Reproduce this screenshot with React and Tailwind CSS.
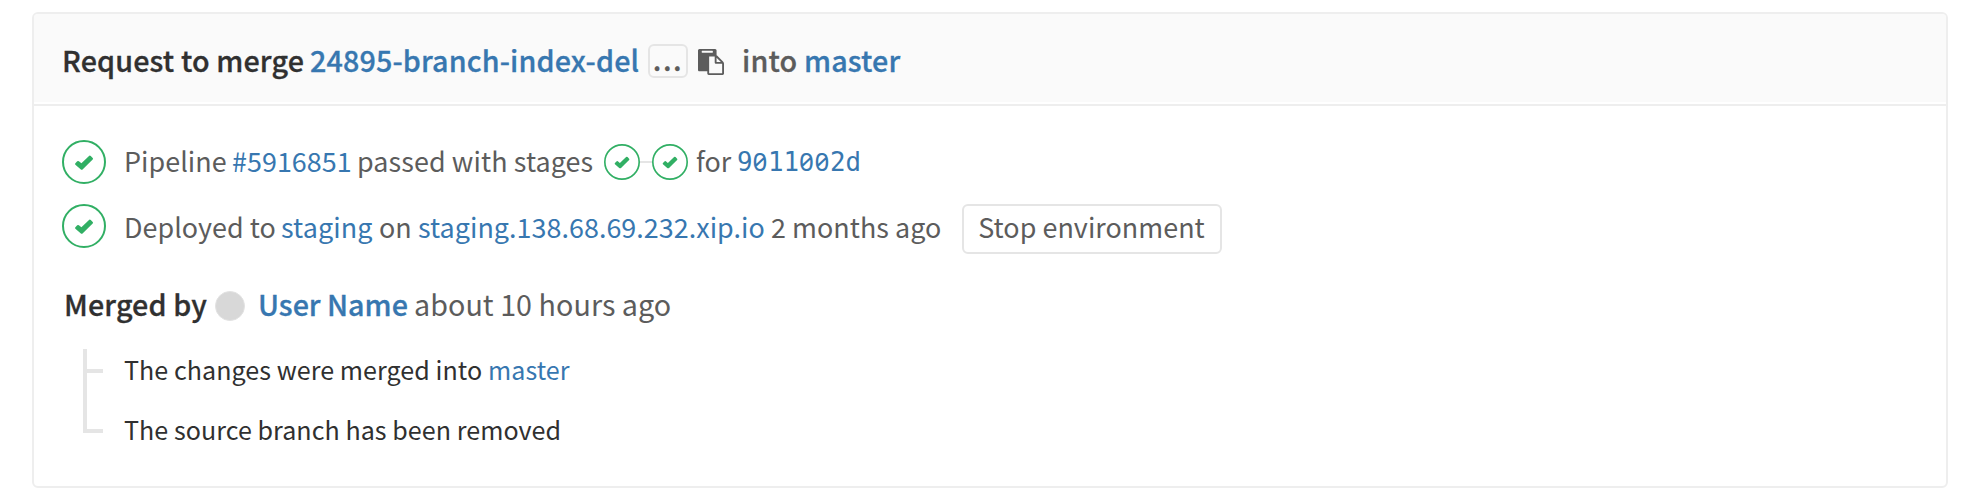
import React from "react";

function Check({ className }) {
  return (
    <svg viewBox="0 0 44 44" className={className} fill="none">
      <circle cx="22" cy="22" r="21" stroke="#31af64" strokeWidth="2" />
      <path
        d="M13.4 23.2 L15.2 21.3 Q16 20.6 16.9 21.2 L19.4 23.2 L27 15.9 Q27.9 15.2 28.8 16 L30.7 18 Q31.4 18.8 30.7 19.6 L20.8 29.2 Q19.7 30.2 18.6 29.2 L13.4 24.7 Q12.6 24 13.4 23.2 Z"
        fill="#31af64"
      />
    </svg>
  );
}

function ClipboardIcon() {
  return (
    <svg viewBox="0 0 1792 1792" className="h-[26px] w-[26px] shrink-0" fill="#5c5c5c">
      <path d="M768 1664h896v-640h-416q-40 0-68-28t-28-68v-416h-384v1152zm256-1440v-64q0-13-9.500-22.500t-22.500-9.500h-704q-13 0-22.500 9.500t-9.500 22.500v64q0 13 9.500 22.500t22.500 9.500h704q13 0 22.500-9.500t9.500-22.500zm256 672h299l-299-299v299zm512 128v672q0 40-28 68t-68 28h-960q-40 0-68-28t-28-68v-160h-544q-40 0-68-28t-28-68v-1344q0-40 28-68t68-28h1088q40 0 68 28t28 68v328q21 13 36 28l408 408q28 28 48 76t20 88z" />
    </svg>
  );
}

const link = "shrink-0 text-[#3777b0]";
const strong = "font-medium tracking-[0.14px] [-webkit-text-stroke:0.3px]";
const zero = "font-['Noto_Sans',sans-serif] text-[26px] tracking-[0.6px] [font-feature-settings:'zero']";

export default function App() {
  return (
    <div className="h-[504px] w-[1970px] overflow-hidden bg-white pl-8 pt-3 font-['Noto_Sans_CJK_SC',sans-serif] text-[26.9px] leading-10 tracking-[0.04px] whitespace-nowrap text-[#5c5c5c]">
      <div className="h-[476px] w-[1916px] rounded-md border-2 border-[#eeeeee]">
        <div className="h-[92px] border-b-2 border-[#eeeeee] pb-0.5">
          <div className={`${strong} flex h-[88px] items-start rounded-t bg-[#fafafa] pl-7 pt-[26px] text-[28.7px]`}>
            <span className="w-[248px] shrink-0 text-[#303030]">Request to merge</span>
            <a className={`${link} w-[338px]`}>24895-branch-index-del</a>
            <button className="mt-1 h-[34px] w-10 shrink-0 rounded-md border-2 border-[#e5e5e5] pb-1 text-center leading-[26px] tracking-[1.6px]">...</button>
            <span className="mt-[9px] ml-2.5 flex w-[44px] shrink-0"><ClipboardIcon /></span>
            <span className="w-[62px] shrink-0">into</span>
            <a className={link}>master</a>
          </div>
        </div>

        <div className="flex flex-col pl-7 pt-8">
          <div className="flex h-16 items-start pt-0.5">
            <Check className="h-11 w-11 shrink-0" />
            <span className="mt-px ml-[18px] w-[108px] shrink-0">Pipeline</span>
            <a className={`${link} mt-px w-[125px]`}>#5916851</a>
            <span className="mt-px w-[247px] shrink-0 tracking-[0.1px]">passed with stages</span>
            <span className="mt-1 flex w-[92px] shrink-0 items-center">
              <Check className="h-9 w-9" />
              <span className="h-0.5 w-3 bg-[#e5e5e5]" />
              <Check className="h-9 w-9" />
            </span>
            <span className="mt-px w-[41px] shrink-0">for</span>
            <a className={`${link} mt-px font-['DejaVu_Sans_Mono',monospace] text-[25.8px] tracking-normal`}>
              9<span className={zero}>0</span>11<span className={zero}>00</span>2d
            </a>
          </div>

          <div className="flex h-[82px] items-start pt-0.5">
            <Check className="h-11 w-11 shrink-0" />
            <span className="mt-[3px] ml-[18px] w-[157px] shrink-0">Deployed to</span>
            <a className={`${link} mt-[3px] w-[98px] tracking-[0.12px]`}>staging</a>
            <span className="mt-[3px] w-[39px] shrink-0">on</span>
            <a className={`${link} mt-[3px] w-[353px]`}>staging.138.68.69.232.xip.io</a>
            <span className="mt-[3px] w-[191px] shrink-0">2 months ago</span>
            <button className="h-[50px] w-[260px] shrink-0 rounded-md border-2 border-[#e5e5e5] pr-px pb-1 text-center leading-10 tracking-[0.04px]">Stop environment</button>
          </div>

          <div className="flex h-[65px] items-start pl-0.5 text-[28.7px]">
            <span className={`${strong} w-[151px] shrink-0 text-[#303030]`}>Merged by</span>
            <span className="mt-[7px] h-[30px] w-[30px] shrink-0 rounded-full border border-[#e2e2e2] bg-[#d8d8d8]" />
            <a className="ml-[13px] w-[156px] shrink-0 font-medium tracking-normal text-[#3777b0] [-webkit-text-stroke:0.3px]">User Name</a>
            <span>about 10 hours ago</span>
          </div>

          <div className="flex pl-[21px] text-[25.07px] tracking-[0.05px] text-[#303030]">
            <div className="flex h-[84px] w-5 flex-col justify-between border-l-4 border-[#e5e5e5] pt-5">
              <div className="h-1 bg-[#e5e5e5]" />
              <div className="h-1 bg-[#e5e5e5]" />
            </div>
            <div className="ml-[21px] flex flex-col gap-5">
              <div className="flex">
                <span className="w-[364px] shrink-0">The changes were merged into</span>
                <a className={link}>master</a>
              </div>
              <span>The source branch has been removed</span>
            </div>
          </div>
        </div>
      </div>
    </div>
  );
}
